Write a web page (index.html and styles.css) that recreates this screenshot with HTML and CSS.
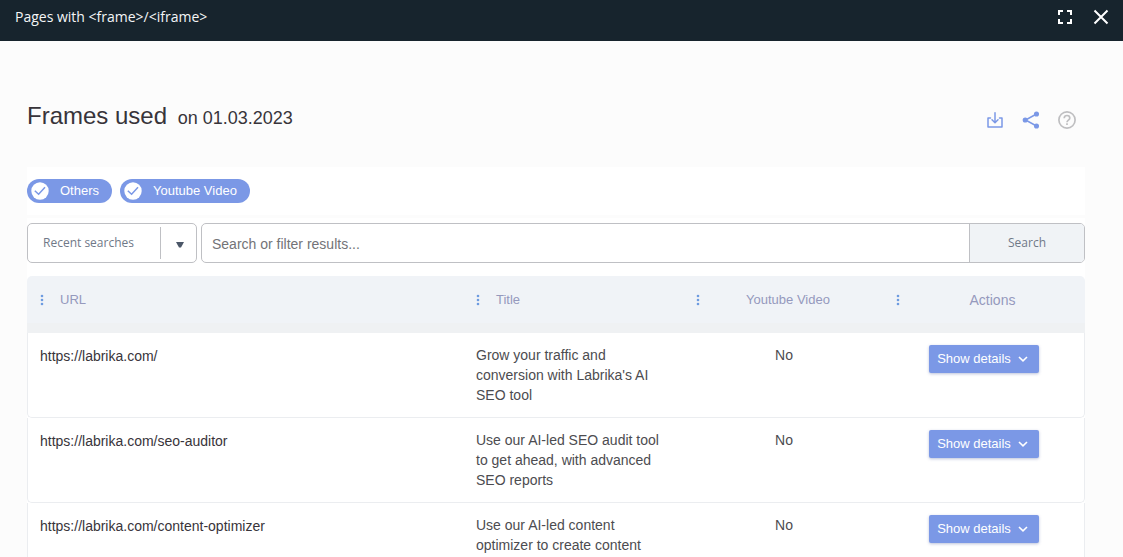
FILE: index.html
```html
<!DOCTYPE html>
<html lang="en">
<head>
<meta charset="utf-8">
<meta name="viewport" content="width=device-width, initial-scale=1">
<title>Pages with &lt;frame&gt;/&lt;iframe&gt;</title>
<link rel="stylesheet" href="styles.css">
</head>
<body>
<svg class="sprite" aria-hidden="true">
  <symbol id="dots" viewBox="0 0 4 12"><circle cx="2" cy="2" r="1.300"/><circle cx="2" cy="6" r="1.300"/><circle cx="2" cy="10" r="1.300"/></symbol>
  <symbol id="chevron" viewBox="0 0 10 10"><path d="M1 3 5 6.800 9 3" fill="none" stroke="currentColor" stroke-width="1.600"/></symbol>
  <symbol id="tick" viewBox="0 0 18 18"><circle cx="9" cy="9" r="8.700" fill="#fff"/><path d="M3.800 8.800 7.600 12.300 14 5.300" fill="none" stroke="#7b98e6" stroke-width="1.500"/></symbol>
</svg>
<header class="topbar">
  <span class="topbar-title">Pages with &lt;frame&gt;/&lt;iframe&gt;</span>
  <div class="topbar-actions">
    <button class="icon-button" type="button" aria-label="Full screen">
      <svg width="18" height="18" viewBox="0 0 18 18" fill="none" stroke="#fff" stroke-width="2"><path d="M3 7V3h4M11 3h4v4M15 11v4h-4M7 15H3v-4"/></svg>
    </button>
    <button class="icon-button" type="button" aria-label="Close">
      <svg width="18" height="18" viewBox="0 0 18 18" fill="none" stroke="#fff" stroke-width="2"><path d="M2.500 2.500 15.500 15.500M15.500 2.500 2.500 15.500"/></svg>
    </button>
  </div>
</header>
<main class="content">
  <div class="heading">
    <h1 class="title">Frames used <small class="date">on 01.03.2023</small></h1>
    <div class="tools">
      <button class="icon-button" type="button" aria-label="Download">
        <svg width="18" height="18" viewBox="0 0 18 18" fill="none" stroke="#7b98e6" stroke-width="1.500" stroke-linejoin="round" stroke-linecap="round"><path d="M4.500 7H2v9h14V7h-2.500M9 1.800v9.700M6 8.700l3 3 3-3"/></svg>
      </button>
      <button class="icon-button" type="button" aria-label="Share">
        <svg width="18" height="18" viewBox="0 0 18 18" fill="#7b98e6" stroke="#7b98e6" stroke-width="1.500"><path d="M14.500 3 3.500 9l11 6" fill="none"/><circle cx="14.500" cy="3" r="1.800"/><circle cx="3.200" cy="9" r="1.800"/><circle cx="14.500" cy="15" r="1.800"/></svg>
      </button>
      <button class="icon-button" type="button" aria-label="Help">
        <svg width="18" height="18" viewBox="0 0 18 18" fill="none" stroke="#bfbfc1" stroke-width="1.700"><circle cx="9" cy="9" r="8.100"/><path d="M6.200 7.300C6.200 5.500 7.300 4.500 9 4.500s2.800 1 2.800 2.500c0 2-2.800 2.300-2.800 4.300M9 12.300V14"/></svg>
      </button>
    </div>
  </div>
  <div class="filters">
    <button class="chip" type="button" aria-pressed="true"><svg width="18" height="18"><use href="#tick"/></svg>Others</button>
    <button class="chip" type="button" aria-pressed="true"><svg width="18" height="18"><use href="#tick"/></svg>Youtube Video</button>
  </div>
  <section class="results">
    <form class="search">
      <div class="recent">
        <select class="recent-select" aria-label="Recent searches"><option>Recent searches</option></select>
        <span class="recent-caret"><svg width="8" height="6" viewBox="0 0 8 6"><path d="M0 0h8L5 5.500H3z" fill="#4b5768"/></svg></span>
      </div>
      <div class="query">
        <input class="query-input" type="text" aria-label="Search or filter results" placeholder="Search or filter results...">
        <button class="query-button" type="button">Search</button>
      </div>
    </form>
    <table class="table">
      <colgroup><col class="col-url"><col class="col-title"><col class="col-video"><col class="col-actions"></colgroup>
      <thead>
        <tr>
          <th><div class="head"><svg class="dots"><use href="#dots"/></svg><span>URL</span></div></th>
          <th><div class="head"><svg class="dots"><use href="#dots"/></svg><span>Title</span></div></th>
          <th><div class="head centered"><svg class="dots"><use href="#dots"/></svg><span>Youtube Video</span></div></th>
          <th><div class="head centered actions"><svg class="dots"><use href="#dots"/></svg><span>Actions</span></div></th>
        </tr>
      </thead>
      <tbody>
        <tr>
          <td><a class="url" href="https://labrika.com/">https://labrika.com/</a></td>
          <td>Grow your traffic and conversion with Labrika's AI SEO tool</td>
          <td class="center">No</td>
          <td class="center"><button class="details" type="button">Show details<svg width="10" height="10"><use href="#chevron"/></svg></button></td>
        </tr>
        <tr>
          <td><a class="url" href="https://labrika.com/seo-auditor">https://labrika.com/seo-auditor</a></td>
          <td>Use our AI-led SEO audit tool to get ahead, with advanced SEO reports</td>
          <td class="center">No</td>
          <td class="center"><button class="details" type="button">Show details<svg width="10" height="10"><use href="#chevron"/></svg></button></td>
        </tr>
        <tr>
          <td><a class="url" href="https://labrika.com/content-optimizer">https://labrika.com/content-optimizer</a></td>
          <td>Use our AI-led content optimizer to create content</td>
          <td class="center">No</td>
          <td class="center"><button class="details" type="button">Show details<svg width="10" height="10"><use href="#chevron"/></svg></button></td>
        </tr>
      </tbody>
    </table>
  </section>
</main>
</body>
</html>
```
FILE: styles.css
```css
* { box-sizing: border-box; }
body {
  margin: 0;
  height: 100vh;
  overflow: hidden;
  background: #fcfcfc;
  color: #4c4c50;
  font-family: "Liberation Sans", Arial, sans-serif;
  font-size: 14px;
  line-height: 20px;
}
button, input, select { font: inherit; margin: 0; }
.sprite { position: absolute; width: 0; height: 0; }

.topbar {
  display: flex;
  justify-content: space-between;
  align-items: center;
  height: 41px;
  padding: 0 13px 7px 15px;
  background: #17242d;
  color: #f4f6f7;
  font-family: "Open Sans", "Noto Sans", sans-serif;
}
.topbar-actions { display: flex; gap: 18px; }
.icon-button { display: flex; padding: 0; border: 0; background: none; }

.content { padding: 61px 38px 0 27px; }
.heading {
  display: flex;
  justify-content: space-between;
  align-items: center;
  height: 30px;
  margin-bottom: 35px;
}
.title { margin: 0; color: #38343a; font-size: 24px; line-height: 30px; font-weight: 400; }
.date { margin-left: 4px; font-size: 18px; }
.tools { display: flex; gap: 18px; padding: 6px 9px 0 0; }

.filters {
  display: flex;
  align-items: center;
  gap: 8px;
  height: 48px;
  margin-bottom: 3px;
  background: #fff;
}
.chip {
  display: flex;
  align-items: center;
  gap: 11px;
  height: 24px;
  padding: 0 13px 0 4px;
  border: 0;
  border-radius: 12px;
  background: #7b98e6;
  color: #fff;
  font-size: 13px;
}

.results { padding-top: 5px; background: #fff; }
.search { display: flex; gap: 4px; height: 40px; margin-bottom: 13px; }
.recent, .query {
  display: flex;
  border: 1px solid #bfc0c4;
  border-radius: 5px;
  background: #fff;
  overflow: hidden;
}
.recent { position: relative; width: 170px; align-items: center; }
.recent-select {
  appearance: none;
  width: 100%;
  height: 38px;
  padding: 0 36px 0 15px;
  border: 0;
  background: none;
  color: #707988;
  font-family: "Open Sans", "Noto Sans", sans-serif;
  font-size: 12px;
}
.recent-caret {
  position: absolute;
  top: 3px;
  bottom: 3px;
  right: 0;
  width: 36px;
  display: flex;
  align-items: center;
  justify-content: center;
  padding: 4px 0 0 2px;
  border-left: 1px solid #bfc0c4;
  pointer-events: none;
}
.query { flex: 1; }
.query-input { flex: 1; min-width: 0; padding: 2px 10px 0; border: 0; background: none; outline: 0; }
.query-input::placeholder { color: #737377; opacity: 1; }
.query-button {
  width: 115px;
  padding: 0;
  border: 0;
  border-left: 1px solid #bfc0c4;
  background: #f0f3f6;
  color: #707988;
  font-family: "Open Sans", "Noto Sans", sans-serif;
  font-size: 12px;
}

.table { width: 100%; table-layout: fixed; border-collapse: separate; border-spacing: 0; }
.col-title { width: 220px; }
.col-video { width: 200px; }
.col-actions { width: 201px; }
th {
  height: 57px;
  padding: 0 12px 10px;
  background: linear-gradient(#f0f3f7 47px, #eff1f3 47px);
  color: #9599bd;
  font-size: 13px;
  font-weight: 400;
  text-align: left;
}
th:first-child { border-top-left-radius: 5px; padding-left: 13px; }
th:last-child { border-top-right-radius: 5px; }
.head { display: flex; align-items: center; gap: 16px; }
.dots { width: 4px; height: 12px; flex: none; fill: #6d9be0; }
.head.centered span { flex: 1; text-align: center; padding-right: 12px; }
.head.actions { font-size: 14px; }
.head.actions span { padding-right: 4px; }
td {
  height: 85px;
  padding: 12px;
  border-bottom: 1px solid #ebedf0;
  vertical-align: top;
}
td:first-child { border-left: 1px solid #ebedf0; border-bottom-left-radius: 5px; }
td:last-child { border-right: 1px solid #ebedf0; border-bottom-right-radius: 5px; }
.center { text-align: center; }
.url { display: block; padding-top: 1px; color: #38343a; text-decoration: none; }
.details {
  display: inline-flex;
  align-items: center;
  gap: 7px;
  height: 28px;
  padding: 0 11px 0 8px;
  border: 0;
  border-radius: 2px;
  background: #7b98e6;
  color: #fff;
  font-size: 13px;
  box-shadow: 0 1px 3px rgba(60, 80, 150, .35);
}
```
